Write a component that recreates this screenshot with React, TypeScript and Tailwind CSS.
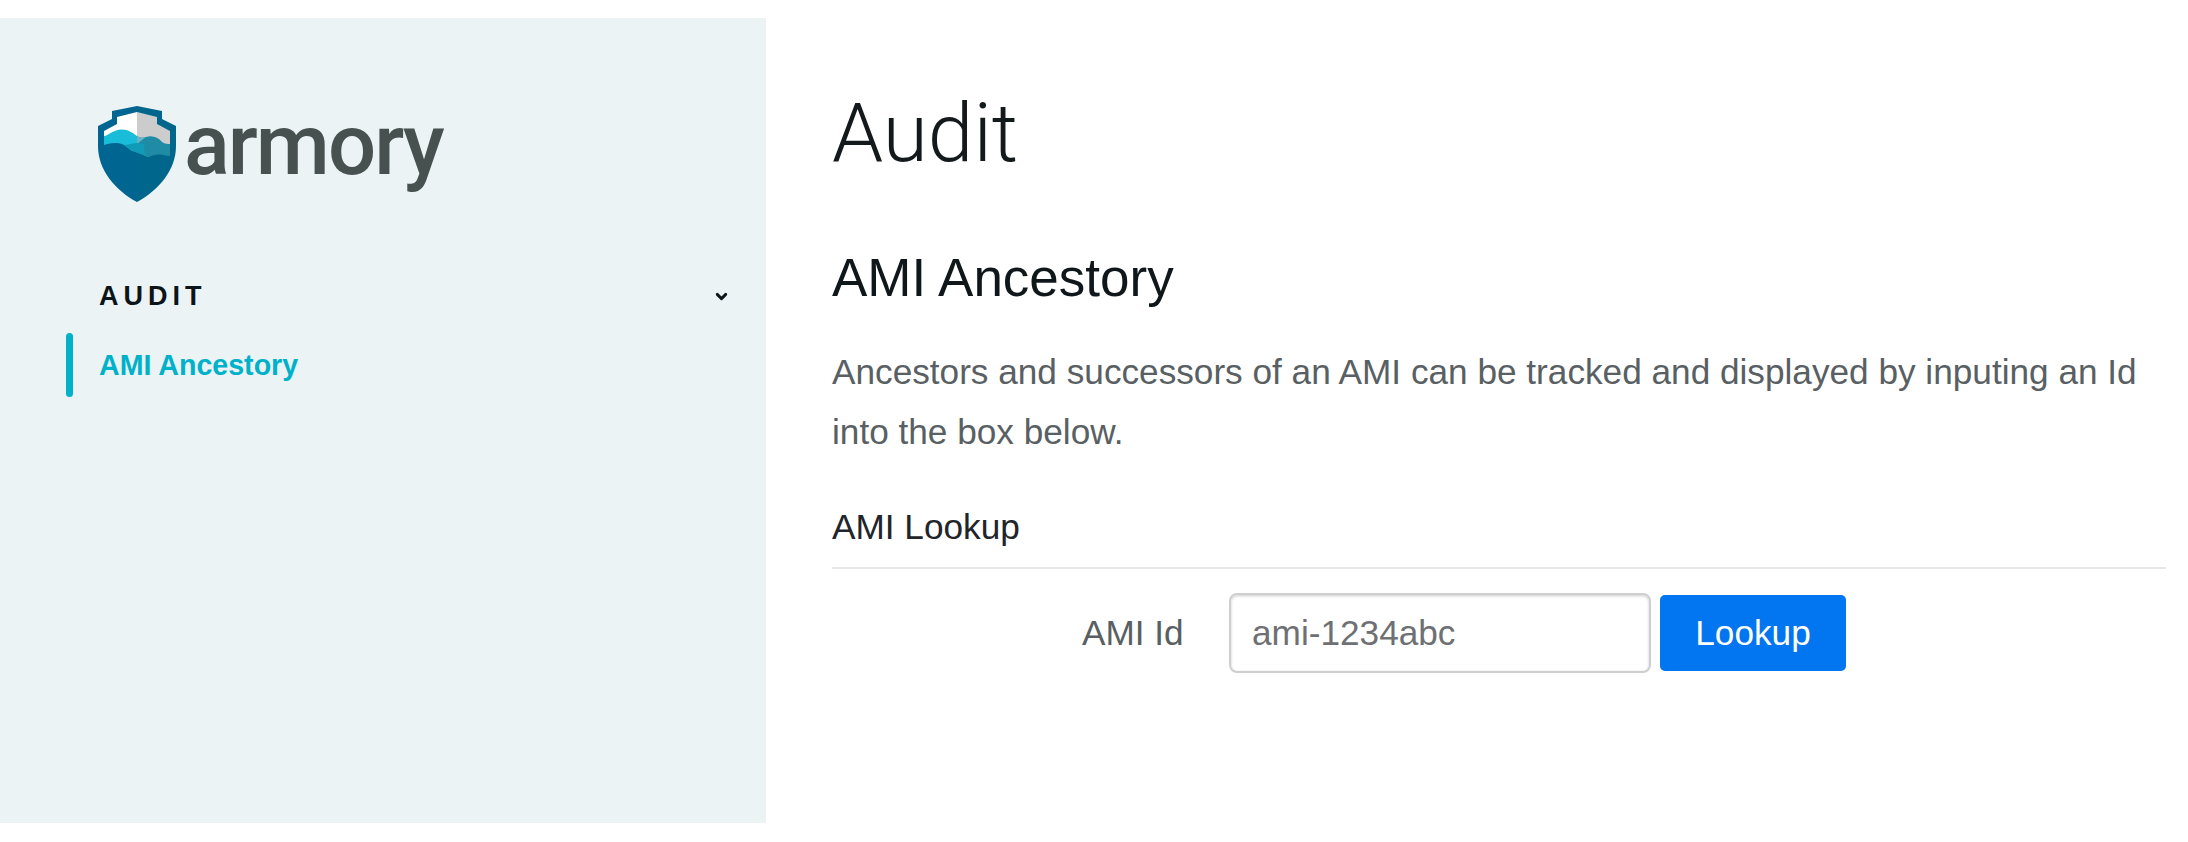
import { ChevronDown } from 'lucide-react'

function Shield() {
  return (
    <svg width="80" height="96" viewBox="0 0 80 96" className="shrink-0">
      <path d="M40 0 L65 5 L65 13 L79 20 L79 40 C79 64 62 84 40 96 Z" fill="#00668c" />
      <path d="M40 0 L15 5 L15 13 L1 20 L1 40 C1 64 18 84 40 96 Z" fill="#006590" />
      <path d="M40 6 L40 40 L7 40 L7 25 L20 18 L20 11 Z" fill="#ffffff" />
      <path d="M40 6 L60 11 L60 18 L73 25 L73 40 L40 40 Z" fill="#cccccc" />
      <path d="M7 30 C11 30 14 25 23 23.5 C31 23 36 27 40 30 L40 46 L7 40 Z" fill="#19bdd9" />
      <path d="M40 30 C43 32 45 32 49 31 C55 29 61 31 65 36 C68 38 71 38 73 38 L73 50 L52 52 L40 46 Z" fill="#1f8ba5" />
      <path d="M40 30 C43 32 45 32 49 31 L40 38 Z" fill="#67b2c4" />
      <path d="M26 39 C31 39 36 37 40 37 L40 47 L34 44 Z" fill="#119bb6" />
      <path d="M40 37 L48 38 C46 42 47 46 50 50 L40 47 Z" fill="#119bb6" />
      <path d="M7 39 C14 37 21 36 27 39 C31 42 35 46 40 47 L40 89 C20 78 7 60 7 39 Z" fill="#006590" />
      <path d="M40 47 C44 48 48 52 52 51 C56 49 60 48 66 49 L72 50 C68 66 56 82 40 89 Z" fill="#00668c" />
    </svg>
  )
}

export default function App() {
  return (
    <div className="h-[842px] w-[2188px] overflow-hidden bg-white pt-[18px] font-['Liberation_Sans',sans-serif]">
      <div className="flex h-[805px]">
        <aside className="w-[766px] shrink-0 bg-[#ebf3f5] pl-[66px] pr-[36px] pt-[88px]">
          <div className="flex items-center pl-[31px]">
            <Shield />
            <span className="ml-[7px] -mt-[19px] font-['Roboto',sans-serif] text-[85px] font-medium leading-[96px] tracking-[-2px] text-[#475150]">armory</span>
          </div>
          <div className="mt-[78px] flex items-center justify-between pl-[33px]">
            <span className="text-[27px] font-bold leading-[32px] tracking-[5px] text-[#0b1418]">AUDIT</span>
            <ChevronDown size={17} strokeWidth={4} className="text-[#0b1418]" />
          </div>
          <div className="mt-[21px] flex h-[64px] items-center">
            <div className="h-[64px] w-[7px] rounded-full bg-[#00b1ca]" />
            <span className="ml-[26px] text-[28.6px] font-bold text-[#00b1ca]">AMI Ancestory</span>
          </div>
        </aside>
        <main className="flex-1 pl-[66px] pr-[22px] pt-[68px]">
          <h1 className="font-['Roboto',sans-serif] text-[82px] font-light leading-[94px] text-[#14191c]">Audit</h1>
          <h2 className="mt-[68px] text-[53px] leading-[60px] text-[#0f171a]">AMI Ancestory</h2>
          <p className="mt-[34px] text-[35.2px] leading-[60px] text-[#596063]">
            Ancestors and successors of an AMI can be tracked and displayed by inputing an Id<br />into the box below.
          </p>
          <div className="mt-[40px] border-b-2 border-[#e5e7e8] pb-[15px] text-[35.2px] leading-[50px] text-[#212529]">AMI Lookup</div>
          <div className="mt-[24px] flex items-center">
            <label className="ml-[250px] w-[147px] text-[35.2px] text-[#596063]">AMI Id</label>
            <input
              readOnly
              placeholder="ami-1234abc"
              className="h-[80px] w-[422px] rounded-[8px] border-2 border-[#cdcfd0] px-[21px] text-[35.2px] shadow-[inset_0_1px_3px_rgba(0,0,0,0.2)] outline-none placeholder:text-[#6e7073]"
            />
            <button className="ml-[9px] h-[76px] w-[186px] rounded-[5px] bg-[#0275f0] text-[35.2px] text-white">Lookup</button>
          </div>
        </main>
      </div>
    </div>
  )
}
